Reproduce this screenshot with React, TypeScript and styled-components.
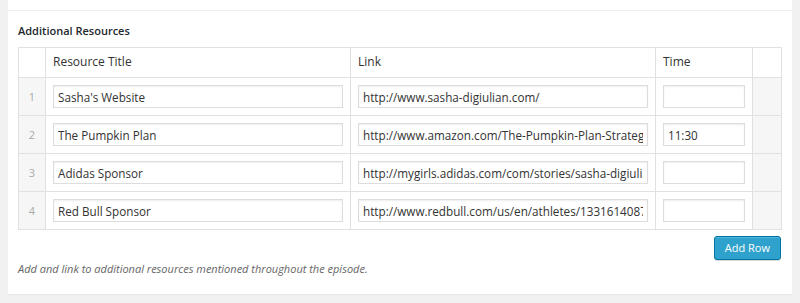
import * as React from "react";
import styled, { createGlobalStyle } from "styled-components";

const GlobalStyle = createGlobalStyle`
  html, body {
    margin: 0;
    padding: 0;
    background: #f1f1f1;
    font-family: "Open Sans", "Noto Sans", "Liberation Sans", sans-serif;
    font-size: 12px;
    color: #444;
  }
`;

const Page = styled.div`
  padding: 0 8px 10px;
`;

const Panel = styled.div`
  background: #fff;
  box-shadow: 0 1px 1px rgba(0, 0, 0, 0.04);
`;

const PrevField = styled.div`
  height: 10px;
  border-bottom: 1px solid #eee;
`;

const Field = styled.div`
  padding: 11px 11px 16px 10px;
`;

const FieldLabel = styled.div`
  font-weight: 600;
  font-size: 11px;
  line-height: 18px;
  color: #23282d;
  margin-bottom: 7px;
`;

const Table = styled.table`
  width: 100%;
  border-collapse: collapse;
  table-layout: fixed;
  border: 1px solid #e1e1e1;
`;

const Th = styled.th<{ $w: number }>`
  box-sizing: border-box;
  width: ${(p) => p.$w}px;
  text-align: left;
  font-weight: 400;
  font-size: 12px;
  color: #333;
  line-height: 18px;
  padding: 5px 7px 6px;
  border: 1px solid #e1e1e1;
  background: #fff;
`;

const Td = styled.td<{ $muted?: boolean }>`
  padding: 7px;
  border: 1px solid #e1e1e1;
  background: ${(p) => (p.$muted ? "#f6f6f6" : "#fff")};
  vertical-align: middle;
`;

const RowNum = styled(Td)`
  text-align: center;
  color: #aaa;
  font-size: 11px;
  padding: 7px 0;
`;

const Input = styled.input`
  display: block;
  box-sizing: border-box;
  width: 100%;
  height: 23px;
  margin: 0;
  padding: 0 4px;
  border: 1px solid #ddd;
  box-shadow: inset 0 1px 2px rgba(0, 0, 0, 0.07);
  background: #fff;
  font-family: inherit;
  font-size: 11.7px;
  color: #333;
  outline: none;
`;

const Actions = styled.div`
  display: flex;
  justify-content: flex-end;
  margin-top: 6px;
`;

const Button = styled.button`
  box-sizing: border-box;
  height: 24px;
  padding: 0 10px 1px;
  border: 1px solid #0074a2;
  border-radius: 3px;
  background: #2ea2cc;
  box-shadow: inset 0 1px 0 rgba(120, 200, 230, 0.5), 0 1px 0 rgba(0, 0, 0, 0.15);
  color: #fff;
  font-family: inherit;
  font-size: 11px;
  line-height: 20px;
  cursor: pointer;
`;

const Description = styled.p`
  margin: 0;
  font-style: italic;
  font-size: 11px;
  color: #666;
  line-height: 18px;
`;

const rows = [
  { title: "Sasha's Website", link: "http://www.sasha-digiulian.com/", time: "" },
  {
    title: "The Pumpkin Plan",
    link: "http://www.amazon.com/The-Pumpkin-Plan-Strategy-Remarkable/dp/1591845254",
    time: "11:30",
  },
  {
    title: "Adidas Sponsor",
    link: "http://mygirls.adidas.com/com/stories/sasha-digiulian",
    time: "",
  },
  {
    title: "Red Bull Sponsor",
    link: "http://www.redbull.com/us/en/athletes/1331614087432/sasha-digiulian",
    time: "",
  },
];

const App = () => {
  return (
    <>
      <GlobalStyle />
      <Page>
        <Panel>
          <PrevField />
          <Field>
            <FieldLabel>{"Additional Resources"}</FieldLabel>
            <Table>
              <thead>
                <tr>
                  <Th $w={27} />
                  <Th $w={305}>{"Resource Title"}</Th>
                  <Th $w={305}>{"Link"}</Th>
                  <Th $w={97}>{"Time"}</Th>
                  <Th $w={29} />
                </tr>
              </thead>
              <tbody>
                {rows.map((row, i) => (
                  <tr key={i}>
                    <RowNum $muted>{i + 1}</RowNum>
                    <Td>
                      <Input type="text" defaultValue={row.title} />
                    </Td>
                    <Td>
                      <Input type="text" defaultValue={row.link} />
                    </Td>
                    <Td>
                      <Input type="text" defaultValue={row.time} />
                    </Td>
                    <Td $muted />
                  </tr>
                ))}
              </tbody>
            </Table>
            <Actions>
              <Button type="button">{"Add Row"}</Button>
            </Actions>
            <Description>
              {"Add and link to additional resources mentioned throughout the episode."}
            </Description>
          </Field>
        </Panel>
      </Page>
    </>
  );
};

export default App;
